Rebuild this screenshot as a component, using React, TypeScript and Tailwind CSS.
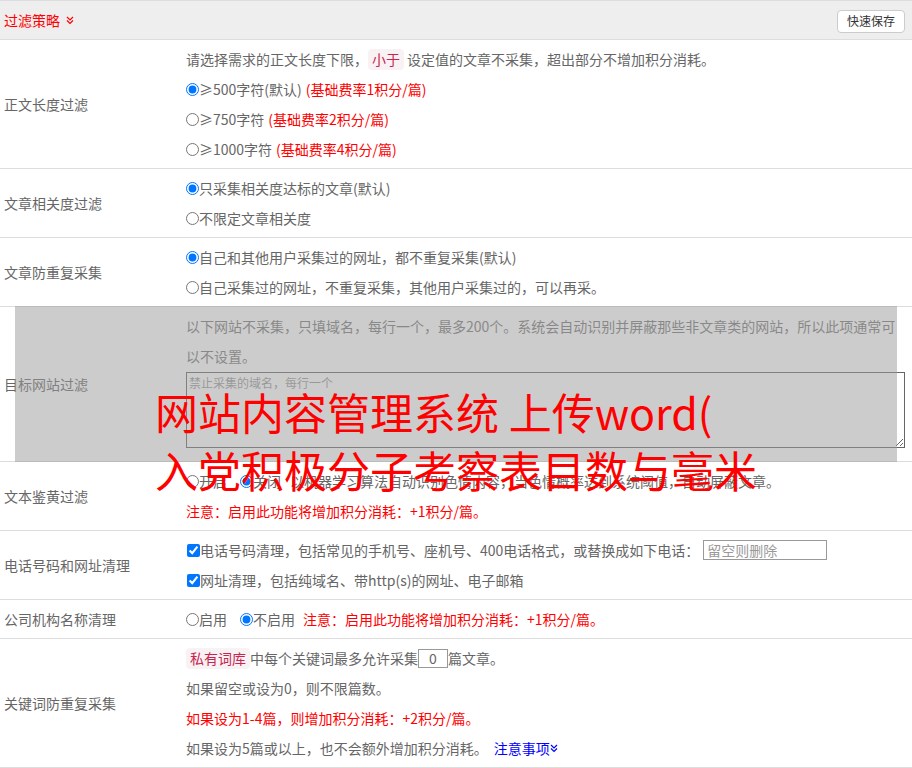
import React from "react";

function DoubleChevron({ color }: { color: string }) {
  return (
    <svg width="8" height="9" viewBox="0 0 8 9" fill="none" stroke={color} strokeWidth="1.2" className="inline-block">
      <polyline points="1,1 4,4 7,1" />
      <polyline points="1,4.5 4,7.5 7,4.5" />
    </svg>
  );
}

function Row({ label, children, extra }: { label: string; children: React.ReactNode; extra?: React.ReactNode }) {
  return (
    <div className="relative flex border-b border-[#ddd]">
      <div className="w-[186px] shrink-0 pl-1 flex items-center text-[#666]">{label}</div>
      <div className="flex-1 min-w-0 py-1 pr-[7px]">{children}</div>
      {extra}
    </div>
  );
}

function Line({ children }: { children: React.ReactNode }) {
  return <div className="h-[30px] flex items-center whitespace-nowrap">{children}</div>;
}

function Radio({ name, checked }: { name: string; checked?: boolean }) {
  return <input type="radio" name={name} defaultChecked={checked} className="m-0 w-[13px] h-[13px] shrink-0" />;
}

function Check() {
  return <input type="checkbox" defaultChecked className="m-0 ml-px w-[13px] h-[13px] shrink-0" />;
}

function Badge({ children }: { children: React.ReactNode }) {
  return <span className="bg-[#f9f2f4] text-[#c7254e] px-1 rounded-[4px] leading-[21px]">{children}</span>;
}

export default function App() {
  return (
    <div className="relative w-full bg-white text-[14px] text-[#666] font-['Noto_Sans_CJK_SC',sans-serif]">
      <div className="h-10 border-y border-[#ddd] bg-[#eee] flex items-center justify-between pl-1 pr-[7px]">
        <div className="flex items-center gap-[6px] text-[#ff0000]">
          <span>过滤策略</span>
          <DoubleChevron color="#ff0000" />
        </div>
        <button className="mt-[2px] h-[23px] px-[9px] bg-white border border-[#ccc] rounded-[4px] text-[12px] text-[#333]">快速保存</button>
      </div>

      <Row label="正文长度过滤">
        <Line>
          请选择需求的正文长度下限，<Badge>小于</Badge>
          <span className="ml-[3px]">设定值的文章不采集，超出部分不增加积分消耗。</span>
        </Line>
        <Line>
          <Radio name="len" checked />
          <span>≥500字符(默认)</span>
          <span className="ml-[4px] text-[#ff0000]">(基础费率1积分/篇)</span>
        </Line>
        <Line>
          <Radio name="len" />
          <span>≥750字符</span>
          <span className="ml-[4px] text-[#ff0000]">(基础费率2积分/篇)</span>
        </Line>
        <Line>
          <Radio name="len" />
          <span>≥1000字符</span>
          <span className="ml-[4px] text-[#ff0000]">(基础费率4积分/篇)</span>
        </Line>
      </Row>

      <Row label="文章相关度过滤">
        <Line>
          <Radio name="rel" checked />
          <span>只采集相关度达标的文章(默认)</span>
        </Line>
        <Line>
          <Radio name="rel" />
          <span>不限定文章相关度</span>
        </Line>
      </Row>

      <Row label="文章防重复采集">
        <Line>
          <Radio name="dup" checked />
          <span>自己和其他用户采集过的网址，都不重复采集(默认)</span>
        </Line>
        <Line>
          <Radio name="dup" />
          <span>自己采集过的网址，不重复采集，其他用户采集过的，可以再采。</span>
        </Line>
      </Row>

      <Row
        label="目标网站过滤"
        extra={<div className="absolute left-[15px] right-[15px] top-[-1px] bottom-[-1px] bg-[#99999980] pointer-events-none" />}
      >
        <div className="max-w-[710px] leading-[30px] text-[#777]">
          以下网站不采集，只填域名，每行一个，最多200个。系统会自动识别并屏蔽那些非文章类的网站，所以此项通常可以不设置。
        </div>
        <textarea
          placeholder="禁止采集的域名，每行一个"
          className="block w-full mt-px mb-[9px] h-[76px] border border-[#666] bg-white px-[2px] py-[3px] text-[12px] leading-[14px] placeholder:text-[#999]"
        />
      </Row>

      <Row label="文本鉴黄过滤">
        <Line>
          <Radio name="porn" />
          <span className="mr-[13px]">开启</span>
          <Radio name="porn" checked />
          <span className="mr-[9px]">关闭</span>
          <span>以机器学习算法自动识别色情内容，当色情概率达到系统阈值，自动屏蔽文章。</span>
        </Line>
        <Line>
          <span className="text-[#ff0000]">注意：启用此功能将增加积分消耗：+1积分/篇。</span>
        </Line>
      </Row>

      <Row label="电话号码和网址清理">
        <Line>
          <Check />
          <span>电话号码清理，包括常见的手机号、座机号、400电话格式，或替换成如下电话：</span>
          <input
            type="text"
            placeholder="留空则删除"
            className="ml-[4px] w-[124px] h-[20px] border border-[#999] px-[3px] text-[14px] placeholder:text-[#999]"
          />
        </Line>
        <Line>
          <Check />
          <span>网址清理，包括纯域名、带http(s)的网址、电子邮箱</span>
        </Line>
      </Row>

      <Row label="公司机构名称清理">
        <Line>
          <Radio name="org" />
          <span className="mr-[13px]">启用</span>
          <Radio name="org" checked />
          <span className="mr-[8px]">不启用</span>
          <span className="text-[#ff0000]">注意：启用此功能将增加积分消耗：+1积分/篇。</span>
        </Line>
      </Row>

      <Row label="关键词防重复采集">
        <Line>
          <Badge>私有词库</Badge>
          <span>中每个关键词最多允许采集</span>
          <input
            type="text"
            defaultValue="0"
            className="w-[30px] h-[19px] border border-[#999] text-center text-[14px] text-[#666]"
          />
          <span>篇文章。</span>
        </Line>
        <Line>如果留空或设为0，则不限篇数。</Line>
        <Line>
          <span className="text-[#ff0000]">如果设为1-4篇，则增加积分消耗：+2积分/篇。</span>
        </Line>
        <Line>
          <span>如果设为5篇或以上，也不会额外增加积分消耗。</span>
          <span className="ml-[6px] text-[#0000ff]">注意事项</span>
          <DoubleChevron color="#0000ff" />
        </Line>
      </Row>

      <div className="absolute left-[155px] top-[382px] text-[43px] leading-[58px] text-[#ff0000] whitespace-nowrap pointer-events-none">
        <div>网站内容管理系统 上传word(</div>
        <div>入党积极分子考察表目数与毫米</div>
      </div>
    </div>
  );
}
